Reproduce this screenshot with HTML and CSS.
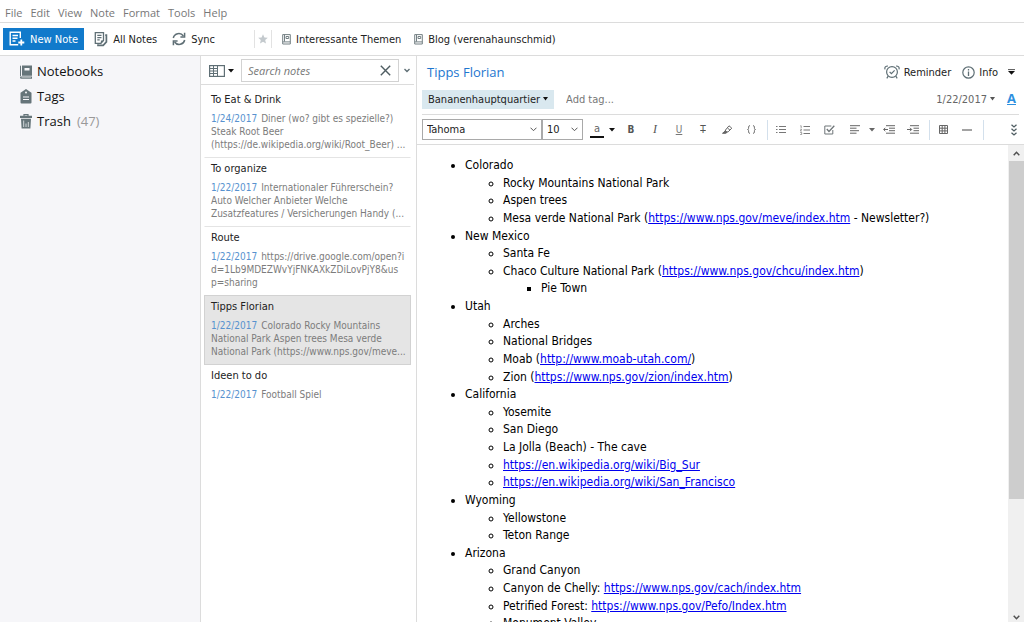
FILE: index.html
```html
<!DOCTYPE html>
<html lang="en">
<head>
<meta charset="utf-8">
<title>Tipps Florian</title>
<link rel="stylesheet" href="styles.css">
</head>
<body>
<div class="app">
  <nav class="menubar">
    <button>File</button><button>Edit</button><button>View</button><button>Note</button><button>Format</button><button>Tools</button><button>Help</button>
  </nav>

  <header class="toolbar">
    <button class="new-note">
      <svg width="16" height="16" viewBox="0 0 16 16" fill="none" stroke="#fff" stroke-width="1.4"><path d="M11.3 7V1.2H1.2v12.6h8"/><path d="M3.5 4.5h5.5M3.5 7.3h5M3.5 10h3"/><path d="M12.3 8.5v6M9.3 11.5h6" stroke-width="1.8"/></svg>
      New Note
    </button>
    <button class="tool all-notes">
      <svg width="14" height="16" viewBox="0 0 14 16" fill="none" stroke="#5f6f75" stroke-width="1.3"><path d="M1.3 1.7h8.2v7.8l-2.6 2.8H1.3z"/><path d="M3.3 4.3h4.2M3.3 6.6h4.2M3.3 8.9h2.4"/><path d="M11.2 4.2h1.2v6.7l-3.2 3.5H4v-1.2" stroke-width="1.7"/><path d="M9.5 9.5H6.9v2.8z" fill="#5f6f75" stroke="none"/></svg>
      All Notes
    </button>
    <button class="tool sync">
      <svg width="14" height="14" viewBox="0 0 14 14" fill="none" stroke="#5f6f75" stroke-width="1.5"><path d="M1.3 6A5.6 5.6 0 0 1 11.4 4M12.7 8A5.6 5.6 0 0 1 2.6 10"/><path d="M12.6.8v4.3H8.4M1.4 13.2V8.9h4.2"/></svg>
      Sync
    </button>
    <span class="star"><svg width="10" height="10" viewBox="0 0 10 10"><path d="M5 .3l1.4 3.2 3.4.3-2.6 2.3.8 3.4L5 7.7 2 9.500l.8-3.4L.2 3.800l3.400-.3z" fill="#c3c9cd"/></svg></span>
    <button class="tool shortcut">
      <svg width="9" height="11" viewBox="0 0 9 11" fill="none" stroke="#748084"><path d="M.7.6h7.600v9.400H.7zM2.500.6v7M.7 7.900h7.600"/><path d="M4 2.500h2.700v2H4z"/></svg>
      Interessante Themen
    </button>
    <button class="tool shortcut">
      <svg width="9" height="11" viewBox="0 0 9 11" fill="none" stroke="#748084"><path d="M.7.6h7.600v9.400H.7zM2.500.6v7M.7 7.900h7.600"/><path d="M4 2.500h2.700v2H4z"/></svg>
      Blog (verenahaunschmid)
    </button>
  </header>

  <div class="columns">
    <nav class="sidebar">
      <a href="#notebooks"><svg width="12" height="14" viewBox="0 0 12 14"><path d="M0 1.500Q0 .4 1 .4v10.300Q0 10.900 0 12zM2 .4h10v10.300H2zM0 12.400q0 1.300 1.300 1.300H12v-2.200H1.200q-1.200 0-1.200.9z" fill="#66757a"/><path d="M4.500 3h5v2.500h-5z" fill="#f6f6f9"/><path d="M1.500 12.600H11" stroke="#c5cbcd" stroke-width=".7"/></svg>Notebooks</a>
      <a href="#tags"><svg width="12" height="15" viewBox="0 0 12 15"><path d="M6 0l5.500 3.800V13.500q0 1-1 1h-9q-1 0-1-1V3.800z" fill="#66757a"/><circle cx="6" cy="3.600" r="1" fill="#f6f6f9"/><path d="M3 8h6M3 10.500h6" stroke="#f6f6f9"/></svg>Tags</a>
      <a href="#trash"><svg width="12" height="15" viewBox="0 0 12 15"><path d="M4 2V.6h4V2" fill="none" stroke="#66757a" stroke-width="1.200"/><path d="M0 1.700h12v2.200H0zM1 4.700h10l-.6 9.900H1.600z" fill="#66757a"/><path d="M3.700 6.500v6.500M6 9.500V13M8.300 8v5" stroke="#dfe3e5" stroke-width=".9"/></svg>Trash <span class="count">(47)</span></a>
    </nav>

    <section class="notes">
      <div class="searchbar">
        <button class="view-mode" aria-label="View options">
          <svg width="16" height="12" viewBox="0 0 16 12" fill="none" stroke="#5f6f75"><rect x=".6" y=".6" width="14.800" height="10.800" stroke-width="1.200"/><path d="M8.500 1v10M1 3.500h7.500M1 6h7.500M1 8.500h7.500M4.500 1v10"/></svg>
          <svg width="6" height="4" viewBox="0 0 6 4"><path d="M0 0h6L3 3.500z" fill="#111"/></svg>
        </button>
        <div class="search">
          <input type="text" placeholder="Search notes" aria-label="Search notes">
          <button aria-label="Clear search"><svg width="11" height="11" viewBox="0 0 11 11"><path d="M.8.8l9.400 9.400M10.200.8L.8 10.200" stroke="#4f5d62" stroke-width="1.400"/></svg></button>
        </div>
        <button class="search-more" aria-label="Search options"><svg width="6" height="5" viewBox="0 0 6 5"><path d="M.5 1L3 3.500 5.500 1" fill="none" stroke="#5f6f75" stroke-width="1.400"/></svg></button>
      </div>
      <ul class="note-list">
        <li class="note"><h3>To Eat &amp; Drink</h3><p><time>1/24/2017</time>Diner (wo? gibt es spezielle?)<br>Steak Root Beer<br>(https://de.wikipedia.org/wiki/Root_Beer) ...</p></li>
        <li class="note"><h3>To organize</h3><p><time>1/22/2017</time>Internationaler Führerschein?<br>Auto Welcher Anbieter Welche<br>Zusatzfeatures / Versicherungen Handy (...</p></li>
        <li class="note"><h3>Route</h3><p><time>1/22/2017</time>https://drive.google.com/open?i<br>d=1Lb9MDEZWvYjFNKAXkZDiLovPjY8&amp;us<br>p=sharing</p></li>
        <li class="note selected"><h3>Tipps Florian</h3><p><time>1/22/2017</time>Colorado Rocky Mountains<br>National Park Aspen trees Mesa verde<br>National Park (https://www.nps.gov/meve...</p></li>
        <li class="note"><h3>Ideen to do</h3><p><time>1/22/2017</time>Football Spiel</p></li>
      </ul>
    </section>

    <main class="editor">
      <div class="title-row">
        <h1>Tipps Florian</h1>
        <button class="reminder"><svg width="16" height="14" viewBox="0 0 16 14" fill="none" stroke="#5f6f75" stroke-width="1.200"><circle cx="8" cy="7" r="5.400"/><path d="M5.600 6.800l1.800 1.900 3.200-3.300M1 4.300Q.2 1 4 1M15 4.300Q15.800 1 12 1M4.200 11.200L2.800 13.300M11.800 11.200l1.400 2.100"/></svg>Reminder</button>
        <button class="info"><svg width="13" height="13" viewBox="0 0 13 13"><circle cx="6.500" cy="6.500" r="5.700" fill="none" stroke="#5f6f75" stroke-width="1.200"/><path d="M6.500 3v1.500M6.500 5.500v4.500" stroke="#5f6f75" stroke-width="1.300"/></svg>Info</button>
        <button class="more" aria-label="More"><svg width="7" height="6" viewBox="0 0 7 6"><path d="M0 .6h7" stroke="#555"/><path d="M0 2h7L3.500 5.800z" fill="#111"/></svg></button>
      </div>
      <div class="tag-row">
        <button class="notebook">Bananenhauptquartier<svg width="5" height="4" viewBox="0 0 5 4"><path d="M0 0h5L2.500 3.500z" fill="#111"/></svg></button>
        <input class="add-tag" type="text" placeholder="Add tag..." aria-label="Add tag">
        <button class="date">1/22/2017<svg width="5" height="4" viewBox="0 0 5 4"><path d="M0 0h5L2.500 3.500z" fill="#555"/></svg></button>
        <button class="toggle-format" aria-label="Toggle formatting">A</button>
      </div>
      <div class="format-bar">
        <span class="pick font"><select aria-label="Font"><option>Tahoma</option></select><svg width="7" height="5" viewBox="0 0 7 5"><path d="M.5.7l3 3 3-3" fill="none" stroke="#555"/></svg></span>
        <span class="pick size"><select aria-label="Font size"><option>10</option></select><svg width="7" height="5" viewBox="0 0 7 5"><path d="M.5.7l3 3 3-3" fill="none" stroke="#555"/></svg></span>
        <button class="fmt color" aria-label="Font color">a</button>
        <button class="fmt drop" aria-label="Pick color"><svg width="6" height="4" viewBox="0 0 6 4"><path d="M0 0h6L3 3.500z" fill="#111"/></svg></button>
        <button class="fmt bold">B</button>
        <button class="fmt italic">I</button>
        <button class="fmt underline">U</button>
        <button class="fmt strike" aria-label="Strikethrough">T</button>
        <button class="fmt" aria-label="Highlight"><svg width="11" height="9" viewBox="0 0 11 9" fill="none" stroke="#666"><path d="M3.500 5L7 .8l2.800 2.400-3.600 3.600-3 .4zM5.500 3L8 5.200"/><path d="M.5 8.300l3-2.500 1.500 1.500-1.200 1z" fill="#666"/></svg></button>
        <button class="fmt" aria-label="Code block"><svg width="9" height="9" viewBox="0 0 9 9" fill="none" stroke="#777"><path d="M3 .6Q1.600.6 1.600 2v1.300Q1.600 4.500.5 4.500q1.100 0 1.100 1.200V7Q1.600 8.400 3 8.400M6 .6Q7.400.6 7.400 2v1.300q0 1.200 1.100 1.200-1.100 0-1.100 1.200V7Q7.400 8.400 6 8.400"/></svg></button>
        <span class="sep"></span>
        <button class="fmt" aria-label="Bulleted list"><svg width="10" height="9" viewBox="0 0 10 9" stroke="#777"><path d="M0 1.500h1.500M3 1.500h7M0 4.500h1.500M3 4.500h7M0 7.500h1.500M3 7.500h7"/></svg></button>
        <button class="fmt" aria-label="Numbered list"><svg width="10" height="10" viewBox="0 0 10 10" stroke="#777" fill="none"><path d="M3.500 1.500H10M3.500 5H10M3.500 8.500H10"/><path d="M.3.800H1.200V3M.2 4.200h1.500L.3 6h1.500M.2 7.500h1.500v2H.2" stroke-width=".7"/></svg></button>
        <button class="fmt" aria-label="Checkbox"><svg width="11" height="10" viewBox="0 0 11 10" fill="none" stroke="#6f7679"><path d="M8.800 5v4H.8V1h6.500"/><path d="M2.800 4l2.200 2.500L10.300.8" stroke-width="1.300"/></svg></button>
        <button class="fmt align" aria-label="Align"><svg width="10" height="9" viewBox="0 0 10 9" stroke="#666"><path d="M0 .7h10M0 3.200h6.500M0 5.700h9M0 8.200h6.500"/></svg></button>
        <button class="fmt align-drop" aria-label="Alignment options"><svg width="6" height="4" viewBox="0 0 6 4"><path d="M0 0h6L3 3.500z" fill="#666"/></svg></button>
        <button class="fmt" aria-label="Outdent"><svg width="12" height="9" viewBox="0 0 12 9" stroke="#666" fill="none"><path d="M3 .700h9M6 3.200h6M6 5.700h6M3 8.200h9M5 4.500H.800M2.300 2.800L.6 4.500l1.700 1.700"/></svg></button>
        <button class="fmt" aria-label="Indent"><svg width="12" height="9" viewBox="0 0 12 9" stroke="#666" fill="none"><path d="M3 .700h9M6.500 3.200H12M6.500 5.700H12M3 8.200h9M0 4.500h4.500M3 2.800l1.700 1.700L3 6.200"/></svg></button>
        <span class="sep"></span>
        <button class="fmt" aria-label="Table"><svg width="9" height="9" viewBox="0 0 9 9" fill="none" stroke="#666"><path d="M.5.5h8v8h-8zM3.200.5v8M5.900.5v8M.5 3.200h8M.5 5.900h8"/></svg></button>
        <button class="fmt" aria-label="Horizontal rule"><svg width="10" height="2" viewBox="0 0 10 2"><path d="M0 1h10" stroke="#666" stroke-width="1.200"/></svg></button>
        <span class="sep"></span>
        <button class="fmt overflow" aria-label="More formatting"><svg width="6" height="12" viewBox="0 0 6 12" fill="none" stroke="#4f5d62" stroke-width="1.300"><path d="M.5.800L3 3 5.500.800M.5 4.800L3 7l2.500-2.200M.5 8.800L3 11l2.500-2.200"/></svg></button>
      </div>
      <div class="page">
        <article class="content">
          <ul>
            <li>Colorado
              <ul>
                <li>Rocky Mountains National Park</li>
                <li>Aspen trees</li>
                <li>Mesa verde National Park (<a href="https://www.nps.gov/meve/index.htm">https://www.nps.gov/meve/index.htm</a> - Newsletter?)</li>
              </ul>
            </li>
            <li>New Mexico
              <ul>
                <li>Santa Fe</li>
                <li>Chaco Culture National Park (<a href="https://www.nps.gov/chcu/index.htm">https://www.nps.gov/chcu/index.htm</a>)
                  <ul><li>Pie Town</li></ul>
                </li>
              </ul>
            </li>
            <li>Utah
              <ul>
                <li>Arches</li>
                <li>National Bridges</li>
                <li>Moab (<a href="http://www.moab-utah.com/">http://www.moab-utah.com/</a>)</li>
                <li>Zion (<a href="https://www.nps.gov/zion/index.htm">https://www.nps.gov/zion/index.htm</a>)</li>
              </ul>
            </li>
            <li>California
              <ul>
                <li>Yosemite</li>
                <li>San Diego</li>
                <li>La Jolla (Beach) - The cave</li>
                <li><a href="https://en.wikipedia.org/wiki/Big_Sur">https://en.wikipedia.org/wiki/Big_Sur</a></li>
                <li><a href="https://en.wikipedia.org/wiki/San_Francisco">https://en.wikipedia.org/wiki/San_Francisco</a></li>
              </ul>
            </li>
            <li>Wyoming
              <ul>
                <li>Yellowstone</li>
                <li>Teton Range</li>
              </ul>
            </li>
            <li>Arizona
              <ul>
                <li>Grand Canyon</li>
                <li>Canyon de Chelly: <a href="https://www.nps.gov/cach/index.htm">https://www.nps.gov/cach/index.htm</a></li>
                <li>Petrified Forest: <a href="https://www.nps.gov/Pefo/Index.htm">https://www.nps.gov/Pefo/Index.htm</a></li>
                <li>Monument Valley</li>
              </ul>
            </li>
          </ul>
        </article>
        <div class="scrollbar">
          <button aria-label="Scroll up"><svg width="7" height="5" viewBox="0 0 7 5"><path d="M.7 4.200L3.500 1.300l2.800 2.900" fill="none" stroke="#505050" stroke-width="1.500"/></svg></button>
          <div class="track"><div class="thumb" style="height: 75%"></div></div>
          <button class="down" aria-label="Scroll down"><svg width="7" height="5" viewBox="0 0 7 5"><path d="M.7.8l2.800 2.900L6.300.8" fill="none" stroke="#505050" stroke-width="1.500"/></svg></button>
        </div>
      </div>
    </main>
  </div>
</div>
</body>
</html>
```
FILE: styles.css
```css
* { box-sizing: border-box; }

body {
  margin: 0;
  background: #fff;
  color: #222;
  font-family: "DejaVu Sans Condensed", "Open Sans", sans-serif;
  font-size: 11px;
}

button, input, select {
  margin: 0;
  padding: 0;
  border: 0;
  background: none;
  color: inherit;
  font: inherit;
}

svg { display: block; flex: none; }
h1, h3, p, ul { margin: 0; padding: 0; font-weight: normal; }

.app { display: flex; flex-direction: column; height: 100vh; overflow: hidden; }

.menubar {
  display: flex;
  gap: 8px;
  height: 23px;
  padding: 2px 5px 0;
  border-bottom: 1px solid #dcdcdc;
  color: #777;
  font-family: "Open Sans", sans-serif;
}

.toolbar {
  display: flex;
  align-items: center;
  height: 33px;
  padding-left: 3px;
  border-bottom: 1px solid #dcdcdc;
}
.toolbar button { display: flex; align-items: center; white-space: nowrap; }
.new-note {
  gap: 5px;
  height: 22px;
  padding: 0 6px;
  background: #117acb;
  color: #fff;
}
.tool { gap: 5px; margin-left: 10px; }
.sync { margin-left: 15px; }
.star {
  display: flex;
  align-items: center;
  height: 18px;
  margin-left: 39px;
  padding: 0 3px;
  border: solid #e2e2e2;
  border-width: 0 1px;
}
.shortcut { gap: 5px; }
.shortcut + .shortcut { margin-left: 13px; }

.columns {
  display: grid;
  grid-template-columns: 200px 217px minmax(0, 1fr);
  flex: 1;
  min-height: 0;
}

.sidebar {
  display: flex;
  flex-direction: column;
  padding: 3px 20px;
  background: #f6f6f9;
  font-family: "Open Sans", sans-serif;
  font-size: 13px;
}
.sidebar a {
  display: flex;
  align-items: center;
  gap: 5px;
  line-height: 25px;
  color: #111;
  text-decoration: none;
}
.count { margin-left: 1px; color: #999; }

.notes { border: solid #dcdcdc; border-width: 0 1px; }
.searchbar {
  display: flex;
  align-items: center;
  height: 29px;
  margin-right: 2px;
  padding: 1px 0 0 8px;
  border-bottom: 1px solid #dcdcdc;
}
.view-mode { display: flex; align-items: center; gap: 3px; }
.search {
  display: flex;
  align-items: center;
  flex: 1;
  min-width: 0;
  height: 23px;
  margin-left: 7px;
  padding: 0 7px 0 6px;
  border: 1px solid #d2d2d2;
}
.search input {
  flex: 1;
  min-width: 0;
  font-family: "Open Sans", sans-serif;
  font-style: italic;
}
.search input::placeholder { color: #777; opacity: 1; }
.search-more { margin: 0 4px 0 5px; }

.note-list { padding: 3px 5px 0 3px; list-style: none; }
.note {
  padding: 2px 0 6px 6px;
  border: 1px solid transparent;
  border-bottom-color: #e4e4e4;
  white-space: nowrap;
}
.note + .note { margin-top: -1px; }
.note h3 { margin-bottom: 3px; font-size: 11px; line-height: 18px; }
.note p { color: #7c7c7c; font-size: 10px; line-height: 13px; }
.note time { margin-right: 4px; color: #5792cf; }
.note.selected { border-color: #d2d2d2; background: #e5e5e5; }
.note:last-child { border-bottom-color: transparent; }

.editor { display: flex; flex-direction: column; min-height: 0; }
.title-row, .tag-row { display: flex; align-items: center; margin: 0 5px; }
.title-row { height: 34px; padding: 0 0 2px 5px; }
.title-row h1 {
  margin-right: auto;
  color: #1e76cf;
  font-family: "Open Sans", sans-serif;
  font-size: 13px;
}
.title-row button { display: flex; align-items: center; gap: 4px; }
.info { margin-left: 11px; }
.title-row .more { margin: 0 4px 0 10px; }

.tag-row { height: 25px; padding-bottom: 6px; border-bottom: 1px solid #dcdcdc; }
.tag-row button { display: flex; align-items: center; gap: 3px; }
.notebook { height: 19px; padding: 0 6px; background: #d9e8ef; }
.add-tag { flex: 1; min-width: 0; margin-left: 12px; }
.add-tag::placeholder { color: #777; opacity: 1; }
.date { color: #666; }
.tag-row .toggle-format {
  margin: 0 3px 0 12px;
  border-bottom: 1px solid #2d8fe0;
  color: #2d8fe0;
  font-family: "Open Sans", sans-serif;
  font-size: 13px;
  font-weight: bold;
  line-height: 11px;
}

.format-bar {
  display: flex;
  align-items: center;
  height: 30px;
  padding: 0 5px;
  border-bottom: 1px solid #dcdcdc;
}
.pick { position: relative; height: 21px; border: 1px solid #a9a9a9; }
.pick select { width: 100%; height: 100%; padding-left: 4px; appearance: none; }
.pick svg { position: absolute; right: 4px; top: 7px; pointer-events: none; }
.font { width: 120px; }
.size { width: 41px; }
.fmt {
  display: flex;
  align-items: center;
  justify-content: center;
  width: 24px;
  height: 20px;
  color: #555;
}
.color {
  width: 14px;
  height: 16px;
  margin-left: 7px;
  border-bottom: 2px solid #111;
  color: #666;
}
.drop { width: 15px; }
.bold { font-size: 10px; font-weight: bold; }
.italic { font-family: "Liberation Serif", serif; font-size: 12px; font-style: italic; }
.underline { color: #777; font-size: 10px; text-decoration: underline; }
.strike { font-size: 10px; text-decoration: line-through; }
.sep { width: 1px; height: 20px; margin: 0 1px 0 4px; background: #d3e0ec; }
.align { margin-left: 2px; }
.align-drop { width: 10px; }
.overflow { width: 10px; margin-left: auto; }

.page { display: flex; flex: 1; min-height: 0; }
.content {
  flex: 1;
  min-width: 0;
  overflow: hidden;
  padding: 12px 10px;
  color: #000;
  font-size: 12px;
  line-height: 1.47;
}
.content ul { padding-left: 38px; }
.content a { color: #0000ee; text-decoration: underline; }

.scrollbar { display: flex; flex-direction: column; width: 16px; background: #f0f0f0; }
.scrollbar button { display: flex; align-items: center; justify-content: center; height: 16px; }
.scrollbar .down { height: 10px; }
.track { flex: 1; }
.thumb { margin-left: 1px; background: #cdcdcd; }
```
